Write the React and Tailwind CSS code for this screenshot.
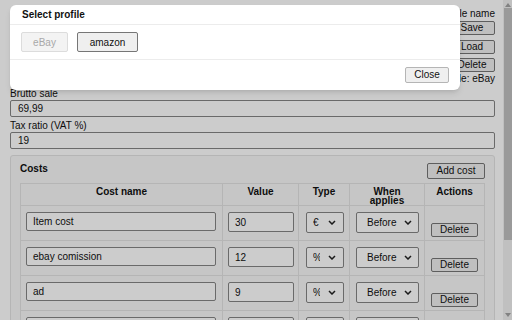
import React from 'react'

const COSTS = [
    { name: 'Item cost', value: '30', type: '€', when: 'Before' },
    { name: 'ebay comission', value: '12', type: '%', when: 'Before' },
    { name: 'ad', value: '9', type: '%', when: 'Before' },
    { name: 'shipping', value: '5', type: '€', when: 'After' },
]

function Chevron() {
    return (
        <svg width="8" height="5" viewBox="0 0 8 5" className="shrink-0">
            <polyline points="1,1 4,4 7,1" fill="none" stroke="#222" strokeWidth="1.5" />
        </svg>
    )
}

function FakeSelect({ text, width, textPad, textWidth }) {
    return (
        <div className={`flex h-[21px] items-center rounded-[2px] border border-[#858585] bg-white ${width}`}>
            <span className={`overflow-hidden whitespace-nowrap ${textPad} ${textWidth}`}>{text}</span>
            <div className="flex flex-1 justify-center">
                <Chevron />
            </div>
        </div>
    )
}

export default function App() {
    return (
        <div className="relative flex h-[320px] w-[512px] overflow-hidden bg-white font-['Liberation_Sans',Arial,sans-serif] text-[10px] text-[#111]">
            {/* page */}
            <div className="flex-1 pl-[10px] pr-[8px] pt-[8px]">
                <div className="flex flex-col items-end">
                    <p className="leading-[12px]">Profile name</p>
                    <button className="mt-[1px] h-[14px] w-[46px] rounded-[2px] border border-[#767676] bg-[#efefef] leading-none">Save</button>
                    <button className="mt-[5px] h-[14px] w-[46px] rounded-[2px] border border-[#767676] bg-[#efefef] leading-none">Load</button>
                    <button className="mt-[4px] h-[14px] w-[46px] rounded-[2px] border border-[#767676] bg-[#efefef] leading-none">Delete</button>
                    <p className="mt-[1px] leading-[12px]">Profile: eBay</p>
                </div>

                <label className="mt-[3px] block leading-[12px]">Brutto sale</label>
                <input readOnly value="69,99" className="block h-[17px] w-full rounded-[2px] border border-[#858585] bg-white px-[7px] outline-none" />
                <label className="mt-[3px] block leading-[12px]">Tax ratio (VAT %)</label>
                <input readOnly value="19" className="block h-[17px] w-full rounded-[2px] border border-[#858585] bg-white px-[7px] outline-none" />

                {/* Costs */}
                <div className="mt-[6px] rounded-[3px] border border-[#e3e3e3] bg-[#f8f8f8] px-[9px] pt-[7px]">
                    <div className="mb-[4px] flex h-[16px] items-center justify-between">
                        <h3 className="-mt-[4px] font-bold leading-[12px]">Costs</h3>
                        <button className="h-[16px] w-[58px] rounded-[2px] border border-[#767676] bg-[#efefef] leading-none">Add cost</button>
                    </div>
                    <table className="w-full table-fixed border-collapse">
                        <colgroup>
                            <col className="w-[202px]" />
                            <col className="w-[76px]" />
                            <col className="w-[51px]" />
                            <col className="w-[75px]" />
                            <col className="w-[60px]" />
                        </colgroup>
                        <thead>
                            <tr className="h-[22px]">
                                {['Cost name', 'Value', 'Type', 'When applies', 'Actions'].map(h => (
                                    <th key={h} className="border border-[#e3e3e3] px-[8px] pt-[3px] align-top font-bold leading-[9px]">{h}</th>
                                ))}
                            </tr>
                        </thead>
                        <tbody>
                            {COSTS.map(c => (
                                <tr key={c.name}>
                                    <td className="border border-[#e3e3e3] pl-[5px] pt-[6px] pb-[7px] align-top">
                                        <input readOnly value={c.name} className="block h-[19px] w-[190px] rounded-[2px] border border-[#858585] bg-white px-[6px] outline-none" />
                                    </td>
                                    <td className="border border-[#e3e3e3] pl-[5px] pt-[6px] pb-[7px] align-top">
                                        <input readOnly value={c.value} className="block h-[20px] w-[66px] rounded-[2px] border border-[#858585] bg-white px-[6px] outline-none" />
                                    </td>
                                    <td className="border border-[#e3e3e3] pl-[7px] pt-[6px] pb-[7px] align-top">
                                        <FakeSelect text={c.type} width="w-[38px]" textPad="ml-[6px]" textWidth="w-[7px]" />
                                    </td>
                                    <td className="border border-[#e3e3e3] pl-[6px] pt-[6px] pb-[7px] align-top">
                                        <FakeSelect text={c.when} width="w-[63px]" textPad="ml-[10px]" textWidth="w-[31px]" />
                                    </td>
                                    <td className="border border-[#e3e3e3] pl-[6px] pt-[17px] pb-0 align-top">
                                        <button className="block h-[14px] w-[47px] rounded-[2px] border border-[#767676] bg-[#efefef] leading-none">Delete</button>
                                    </td>
                                </tr>
                            ))}
                        </tbody>
                    </table>
                </div>
            </div>

            {/* scrollbar */}
            <div className="flex w-[10px] flex-col items-center bg-[#f1f1f1]">
                <svg width="8" height="7" viewBox="0 0 8 7" className="mt-[1px]">
                    <polygon points="4,2 7,6 1,6" fill="#a3a3a3" />
                </svg>
                <div className="h-[232px] w-[8px] bg-[#c1c1c1]" />
                <div className="flex-1" />
                <svg width="8" height="7" viewBox="0 0 8 7" className="mb-[1px]">
                    <polygon points="1,1 7,1 4,5" fill="#a3a3a3" />
                </svg>
            </div>

            {/* backdrop */}
            <div className="absolute inset-0 bg-black/20" />

            {/* modal */}
            <div className="absolute left-[10px] top-[5px] flex h-[85px] w-[450px] flex-col rounded-[6px] bg-white shadow-md">
                <div className="flex h-[20px] items-center border-b border-[#ececec] px-[12px]">
                    <h2 className="font-bold">Select profile</h2>
                </div>
                <div className="flex h-[35px] items-center gap-[9px] border-b border-[#ececec] pl-[11px]">
                    <button disabled className="h-[20px] w-[47px] rounded-[2px] border border-[#dcdcdc] bg-[#f3f3f3] text-[#a8a8a8]">eBay</button>
                    <button className="h-[20px] w-[61px] rounded-[2px] border border-[#767676] bg-[#efefef]">amazon</button>
                </div>
                <div className="flex flex-1 items-center justify-end pr-[11px]">
                    <button className="h-[16px] w-[44px] rounded-[2px] border border-[#b5b5b5] bg-[#efefef] leading-none">Close</button>
                </div>
            </div>
        </div>
    )
}
